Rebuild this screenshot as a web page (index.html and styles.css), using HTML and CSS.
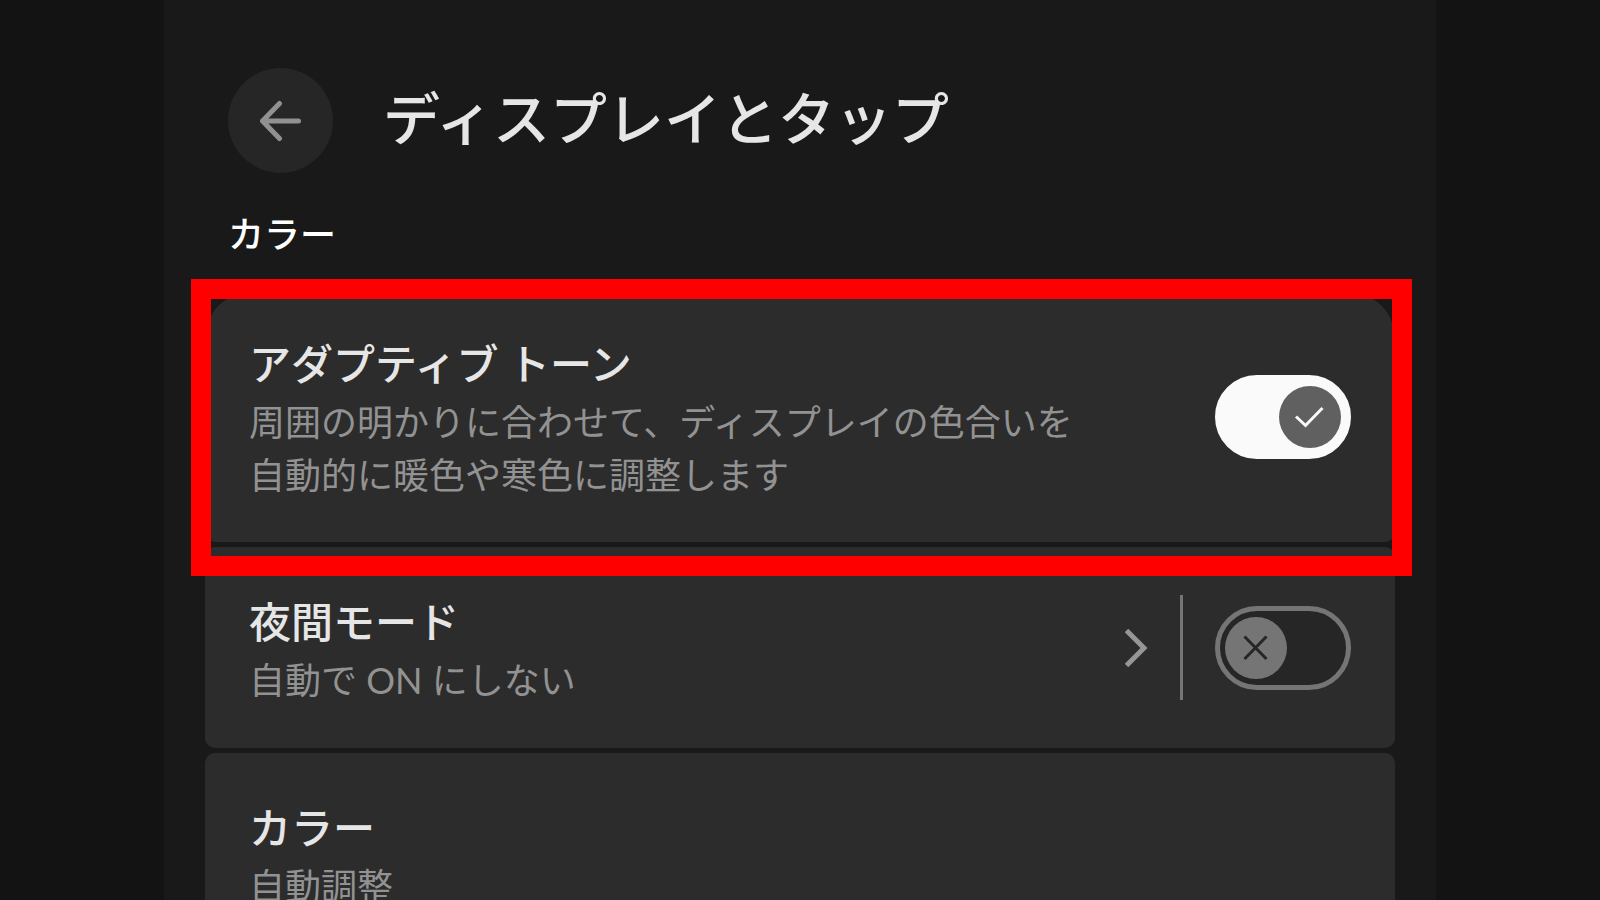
FILE: index.html
```html
<!DOCTYPE html>
<html lang="ja">
<head>
<meta charset="utf-8">
<meta name="viewport" content="width=device-width, initial-scale=1">
<title>ディスプレイとタップ</title>
<link rel="stylesheet" href="styles.css">
</head>
<body>
<main class="screen">
  <header class="header">
    <button class="back" type="button" aria-label="戻る">
      <svg class="back-icon" viewBox="0 0 42 42" aria-hidden="true"><path d="M19.500 3.500 2.500 21 19.500 38.500M3 21H38.500"/></svg>
    </button>
    <h1 class="title">ディスプレイとタップ</h1>
  </header>

  <section class="group">
    <h2 class="group-title">カラー</h2>
    <div class="cards">
      <div class="card card-first">
        <div class="text">
          <label class="name" for="adaptive">アダプティブ トーン</label>
          <p class="summary">周囲の明かりに合わせて、ディスプレイの色合いを<br>自動的に暖色や寒色に調整します</p>
        </div>
        <div class="switch">
          <input class="track" type="checkbox" id="adaptive" checked>
          <svg class="thumb thumb-on" viewBox="0 0 62 62" aria-hidden="true"><path d="M17 30.500 26.500 39.500 43.500 22"/></svg>
        </div>
        <div class="highlight"></div>
      </div>

      <div class="card">
        <div class="text">
          <label class="name" for="night">夜間モード</label>
          <p class="summary">自動で ON にしない</p>
        </div>
        <button class="more" type="button" aria-label="夜間モードの詳細">
          <svg class="more-icon" viewBox="0 0 24 40" aria-hidden="true"><path d="M2.500 2.500 20 20 2.500 37.500"/></svg>
        </button>
        <div class="switch">
          <input class="track" type="checkbox" id="night">
          <svg class="thumb thumb-off" viewBox="0 0 62 62" aria-hidden="true"><path d="M19.500 19.500 41.500 42M41.500 19.500 19.500 42"/></svg>
        </div>
      </div>

      <div class="card">
        <div class="text">
          <h3 class="name">カラー</h3>
          <p class="summary">自動調整</p>
        </div>
      </div>
    </div>
  </section>
</main>
</body>
</html>
```
FILE: styles.css
```css
* {
  box-sizing: border-box;
}

body {
  margin: 0;
  background: #131313;
  color: #e6e6e6;
  font-family: Lato, "Noto Sans CJK JP", sans-serif;
}

h1, h2, h3, p {
  margin: 0;
}

button {
  padding: 0;
  border: 0;
  background: none;
}

svg {
  fill: none;
}

.screen {
  width: 79.5%;
  height: 100vh;
  margin: 0 auto;
  padding: 68px 41px 0;
  overflow-y: auto;
  scrollbar-width: none;
  background: #191919;
}

.header {
  display: flex;
  align-items: center;
  gap: 50px;
  padding-left: 23px;
}

.back {
  display: grid;
  flex: none;
  place-items: center;
  width: 105px;
  height: 105px;
  border-radius: 50%;
  background: #262626;
}

.back-icon {
  width: 42px;
  height: 42px;
  stroke: #919191;
  stroke-width: 5;
  stroke-linecap: round;
  stroke-linejoin: round;
}

.title {
  padding-bottom: 12px;
  font-family: "Noto Sans CJK JP", sans-serif;
  font-size: 57px;
  font-weight: 500;
  line-height: 80px;
}

.group-title {
  padding: 33px 23px;
  color: #fff;
  font-family: "Noto Sans CJK JP", sans-serif;
  font-size: 36px;
  font-weight: 500;
  line-height: 52px;
}

.cards {
  display: flex;
  flex-direction: column;
  gap: 5px;
}

.card {
  position: relative;
  display: flex;
  align-items: center;
  min-height: 201px;
  padding: 40px 44px;
  border-radius: 10px;
  background: #2c2c2c;
}

.card-first {
  border-radius: 48px 48px 10px 10px;
}

.text {
  flex: 1;
}

.name {
  display: block;
  margin-bottom: 3px;
  font-size: 42px;
  font-weight: 500;
  font-family: "Noto Sans CJK JP", sans-serif;
  line-height: 62px;
}

.summary {
  color: #929292;
  font-size: 36px;
  font-weight: 400;
  line-height: 53px;
}

.switch {
  position: relative;
  flex: none;
  width: 136px;
  height: 84px;
}

.track {
  display: block;
  width: 100%;
  height: 100%;
  margin: 0;
  appearance: none;
  border: 5px solid #757575;
  border-radius: 42px;
  background: #262626;
}

.track:checked {
  border-color: #fafafa;
  background: #fafafa;
}

.thumb {
  position: absolute;
  top: 11px;
  width: 62px;
  height: 62px;
  border-radius: 50%;
  pointer-events: none;
}

.thumb-on {
  right: 10px;
  background: #606060;
  stroke: #fafafa;
  stroke-width: 3;
}

.thumb-off {
  left: 10px;
  background: #757575;
  stroke: #262626;
  stroke-width: 3;
}

.more {
  display: flex;
  align-items: center;
  height: 105px;
  margin-right: 32px;
  padding-right: 32px;
  border-right: 3px solid #757575;
}

.more-icon {
  width: 24px;
  height: 40px;
  stroke: #969696;
  stroke-width: 5;
}

.highlight {
  position: absolute;
  z-index: 1;
  top: -12px;
  right: -17px;
  bottom: -34px;
  left: -14px;
  border: 20px solid #f00;
  pointer-events: none;
}
```
